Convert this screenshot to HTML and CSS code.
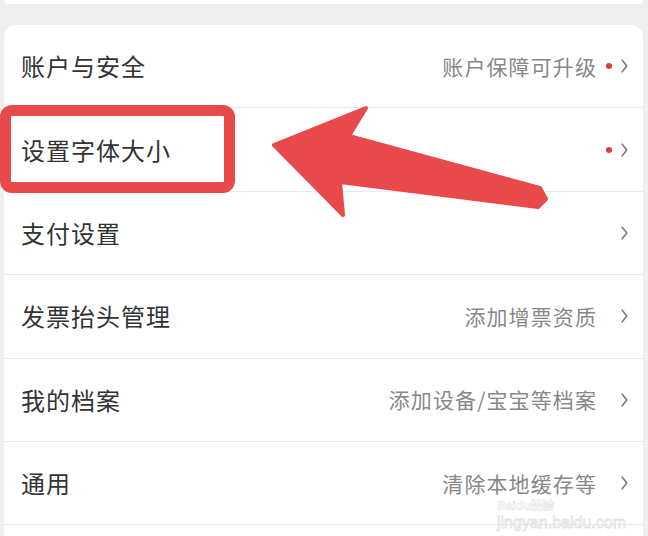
FILE: index.html
```html
<!DOCTYPE html>
<html lang="zh-CN">
<head>
<meta charset="utf-8">
<title>设置</title>
<link rel="stylesheet" href="styles.css">
</head>
<body>
<div class="page">
  <div class="top-card"></div>
  <div class="card">
    <div class="row">
      <span class="title">账户与安全</span>
      <div class="right">
        <span class="sub">账户保障可升级</span>
        <span class="dot"></span>
        <svg class="chev" viewBox="0 0 7 14" width="7" height="14"><path d="M1.2 1.2 L5.8 7 L1.2 12.8"/></svg>
      </div>
    </div>
    <div class="row">
      <span class="title">设置字体大小</span>
      <div class="right">
        <span class="dot"></span>
        <svg class="chev" viewBox="0 0 7 14" width="7" height="14"><path d="M1.2 1.2 L5.8 7 L1.2 12.8"/></svg>
      </div>
    </div>
    <div class="row">
      <span class="title">支付设置</span>
      <div class="right">
        <span class="dot off"></span>
        <svg class="chev" viewBox="0 0 7 14" width="7" height="14"><path d="M1.2 1.2 L5.8 7 L1.2 12.8"/></svg>
      </div>
    </div>
    <div class="row">
      <span class="title">发票抬头管理</span>
      <div class="right">
        <span class="sub">添加增票资质</span>
        <span class="dot off"></span>
        <svg class="chev" viewBox="0 0 7 14" width="7" height="14"><path d="M1.2 1.2 L5.8 7 L1.2 12.8"/></svg>
      </div>
    </div>
    <div class="row">
      <span class="title">我的档案</span>
      <div class="right">
        <span class="sub">添加设备/宝宝等档案</span>
        <span class="dot off"></span>
        <svg class="chev" viewBox="0 0 7 14" width="7" height="14"><path d="M1.2 1.2 L5.8 7 L1.2 12.8"/></svg>
      </div>
    </div>
    <div class="row">
      <span class="title">通用</span>
      <div class="right">
        <span class="sub">清除本地缓存等</span>
        <span class="dot off"></span>
        <svg class="chev" viewBox="0 0 7 14" width="7" height="14"><path d="M1.2 1.2 L5.8 7 L1.2 12.8"/></svg>
      </div>
    </div>
    <div class="row short"></div>
  </div>

  <div class="highlight"></div>
  <svg class="arrow" viewBox="0 0 648 536" width="648" height="536">
    <polygon points="274,145 366,108 349,136 540,188 546,199 538,207 340,182 343,215"/>
  </svg>
  <div class="watermark">
    <span class="wm-logo">Baidu经验</span>
    <span class="wm-url">jingyan.baidu.com</span>
  </div>
</div>
</body>
</html>
```

FILE: styles.css
```css
* { box-sizing: border-box; }

html, body {
  margin: 0;
  padding: 0;
  background: #efefef;
  width: 648px;
  height: 536px;
  overflow: hidden;
}

body {
  font-family: "Noto Sans CJK SC", "Noto Sans", sans-serif;
}

.page {
  position: relative;
  width: 648px;
  height: 536px;
  padding: 0 5px 0 4px;
}

.top-card {
  height: 4px;
  background: #fff;
  border-radius: 0 0 10px 10px;
}

.card {
  margin-top: 21px;
  background: #fff;
  border-radius: 12px 12px 0 0;
}

.row {
  height: 83.4px;
  display: flex;
  align-items: center;
  justify-content: space-between;
  padding: 0 15px 0 17px;
  border-bottom: 1px solid #e9e9e9;
}

.row.short {
  height: 20px;
  border-bottom: none;
}

.title {
  font-size: 24px;
  line-height: 1;
  letter-spacing: 1px;
  color: #333;
}

.right {
  display: flex;
  align-items: center;
}

.sub {
  font-size: 21px;
  line-height: 1;
  letter-spacing: 1.1px;
  color: #888;
  white-space: nowrap;
}

.dot {
  width: 6px;
  height: 6px;
  border-radius: 50%;
  background: #e53a35;
  margin: 0 9px 0 9px;
}

.dot.off {
  visibility: hidden;
}

.chev {
  display: block;
}

.chev path {
  fill: none;
  stroke: #808080;
  stroke-width: 1.7;
  stroke-linecap: round;
  stroke-linejoin: round;
}

.highlight {
  position: absolute;
  left: 0;
  top: 105px;
  width: 235px;
  height: 88px;
  border: 11px solid #e84a4b;
  border-radius: 12px;
}

.arrow {
  position: absolute;
  left: 0;
  top: 0;
}

.arrow polygon {
  fill: #e84a4b;
  stroke: #e84a4b;
  stroke-width: 4;
  stroke-linejoin: round;
}

.watermark {
  position: absolute;
  left: 497px;
  top: 500px;
  display: flex;
  flex-direction: column;
  align-items: flex-start;
}

.wm-logo {
  font-family: "Liberation Sans", "Noto Sans CJK SC", sans-serif;
  font-size: 12px;
  font-weight: bold;
  line-height: 13px;
  color: rgba(255, 255, 255, 0.6);
  -webkit-text-stroke: 0.6px rgba(200, 200, 200, 0.5);
}

.wm-url {
  font-family: "Liberation Sans", sans-serif;
  font-size: 16px;
  line-height: 19px;
  color: rgba(255, 255, 255, 0.6);
  -webkit-text-stroke: 0.8px rgba(200, 200, 200, 0.55);
}
```
